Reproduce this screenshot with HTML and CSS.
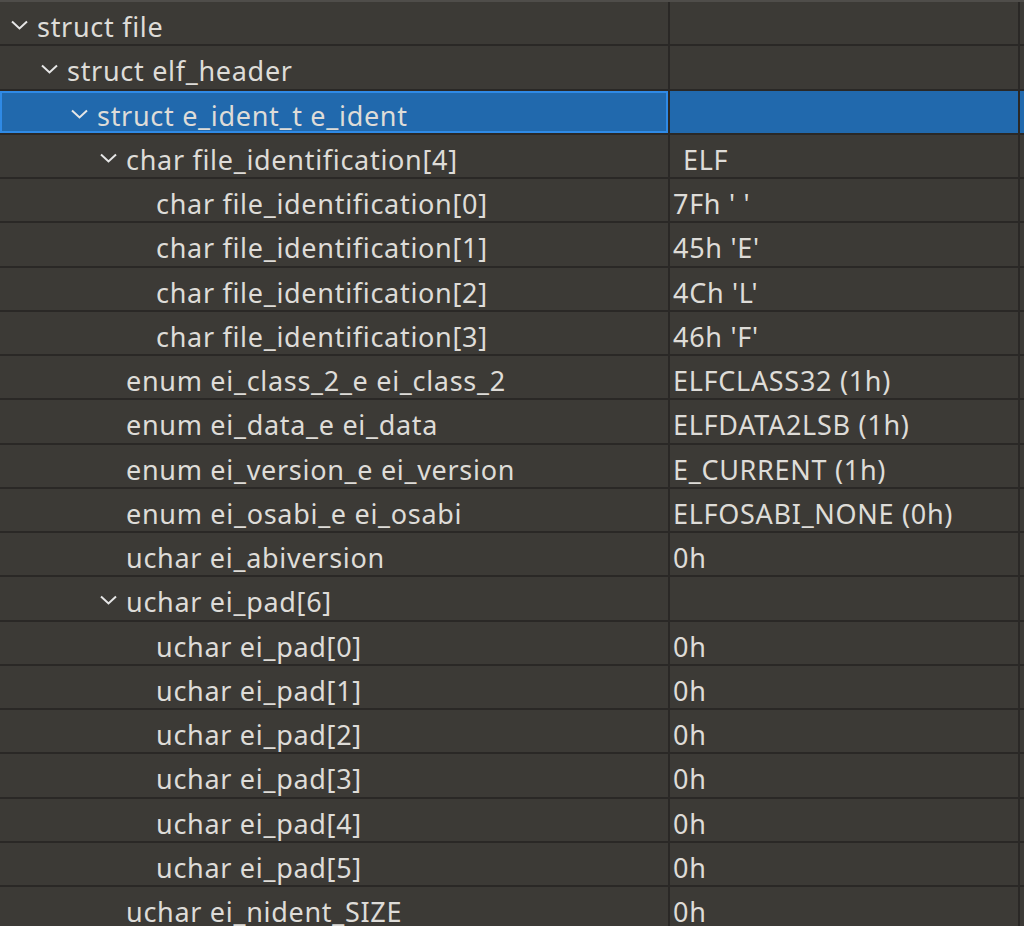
FILE: index.html
```html
<!DOCTYPE html>
<html>
<head>
<meta charset="utf-8">
<link rel="stylesheet" href="styles.css">
</head>
<body>
<div class="tree">
  <div class="row"><div class="name l0"><span class="chev"><svg viewBox="0 0 17 10" width="17" height="10"><path d="M1 1.5 L8.5 8.5 L16 1.5" fill="none" stroke="#e6e6e6" stroke-width="2"/></svg></span><span class="label">struct file</span></div><div class="value"></div><div class="rest"></div></div>
  <div class="row"><div class="name l1"><span class="chev"><svg viewBox="0 0 17 10" width="17" height="10"><path d="M1 1.5 L8.5 8.5 L16 1.5" fill="none" stroke="#e6e6e6" stroke-width="2"/></svg></span><span class="label">struct elf_header</span></div><div class="value"></div><div class="rest"></div></div>
  <div class="row selected"><div class="name l2"><span class="chev"><svg viewBox="0 0 17 10" width="17" height="10"><path d="M1 1.5 L8.5 8.5 L16 1.5" fill="none" stroke="#e6e6e6" stroke-width="2"/></svg></span><span class="label">struct e_ident_t e_ident</span></div><div class="value"></div><div class="rest"></div></div>
  <div class="row"><div class="name l3"><span class="chev"><svg viewBox="0 0 17 10" width="17" height="10"><path d="M1 1.5 L8.5 8.5 L16 1.5" fill="none" stroke="#e6e6e6" stroke-width="2"/></svg></span><span class="label">char file_identification[4]</span></div><div class="value"><span class="lead">ELF</span></div><div class="rest"></div></div>
  <div class="row"><div class="name l4"><span class="label">char file_identification[0]</span></div><div class="value">7Fh ' '</div><div class="rest"></div></div>
  <div class="row"><div class="name l4"><span class="label">char file_identification[1]</span></div><div class="value">45h 'E'</div><div class="rest"></div></div>
  <div class="row"><div class="name l4"><span class="label">char file_identification[2]</span></div><div class="value">4Ch 'L'</div><div class="rest"></div></div>
  <div class="row"><div class="name l4"><span class="label">char file_identification[3]</span></div><div class="value">46h 'F'</div><div class="rest"></div></div>
  <div class="row"><div class="name l3n"><span class="label">enum ei_class_2_e ei_class_2</span></div><div class="value">ELFCLASS32 (1h)</div><div class="rest"></div></div>
  <div class="row"><div class="name l3n"><span class="label">enum ei_data_e ei_data</span></div><div class="value">ELFDATA2LSB (1h)</div><div class="rest"></div></div>
  <div class="row"><div class="name l3n"><span class="label">enum ei_version_e ei_version</span></div><div class="value">E_CURRENT (1h)</div><div class="rest"></div></div>
  <div class="row"><div class="name l3n"><span class="label">enum ei_osabi_e ei_osabi</span></div><div class="value">ELFOSABI_NONE (0h)</div><div class="rest"></div></div>
  <div class="row"><div class="name l3n"><span class="label">uchar ei_abiversion</span></div><div class="value">0h</div><div class="rest"></div></div>
  <div class="row"><div class="name l3"><span class="chev"><svg viewBox="0 0 17 10" width="17" height="10"><path d="M1 1.5 L8.5 8.5 L16 1.5" fill="none" stroke="#e6e6e6" stroke-width="2"/></svg></span><span class="label">uchar ei_pad[6]</span></div><div class="value"></div><div class="rest"></div></div>
  <div class="row"><div class="name l4"><span class="label">uchar ei_pad[0]</span></div><div class="value">0h</div><div class="rest"></div></div>
  <div class="row"><div class="name l4"><span class="label">uchar ei_pad[1]</span></div><div class="value">0h</div><div class="rest"></div></div>
  <div class="row"><div class="name l4"><span class="label">uchar ei_pad[2]</span></div><div class="value">0h</div><div class="rest"></div></div>
  <div class="row"><div class="name l4"><span class="label">uchar ei_pad[3]</span></div><div class="value">0h</div><div class="rest"></div></div>
  <div class="row"><div class="name l4"><span class="label">uchar ei_pad[4]</span></div><div class="value">0h</div><div class="rest"></div></div>
  <div class="row"><div class="name l4"><span class="label">uchar ei_pad[5]</span></div><div class="value">0h</div><div class="rest"></div></div>
  <div class="row"><div class="name l3n"><span class="label">uchar ei_nident_SIZE</span></div><div class="value">0h</div><div class="rest"></div></div>
</div>
</body>
</html>
```
FILE: styles.css
```css
html, body {
  margin: 0;
  padding: 0;
  background: #3c3a36;
  overflow: hidden;
}
body {
  width: 1024px;
  height: 926px;
  font-family: "Noto Sans", "Open Sans", sans-serif;
  font-size: 27px;
  letter-spacing: 0.7px;
  color: #dedcd8;
}
.tree {
  border-top: 2px solid #4f4d4a;
  display: flex;
  flex-direction: column;
}
.row {
  display: flex;
  height: 44.25px;
  box-sizing: border-box;
  border-bottom: 2px solid #2a2826;
  flex: none;
}
.name {
  width: 670px;
  box-sizing: border-box;
  border-right: 2px solid #2a2826;
  display: flex;
  align-items: center;
  white-space: nowrap;
  overflow: hidden;
  padding-top: 7px;
}
.value {
  width: 350px;
  box-sizing: border-box;
  border-right: 2px solid #2a2826;
  display: flex;
  align-items: center;
  padding-left: 3px;
  padding-top: 7px;
  white-space: pre;
}
.rest {
  flex: 1;
}
.chev {
  width: 17px;
  height: 10px;
  display: flex;
  margin-right: 9px;
  margin-top: -3px;
}
.chev svg { display: block; }
.l0 { padding-left: 11px; }
.l1 { padding-left: 41px; }
.l2 { padding-left: 71px; }
.l3 { padding-left: 100px; }
.l3n { padding-left: 126px; }
.l4 { padding-left: 156px; }
.lead { padding-left: 10px; }
.selected {
  background: #2169ad;
}
.selected .name {
  box-shadow: inset 0 0 0 2px #2f8ae6;
}
```
